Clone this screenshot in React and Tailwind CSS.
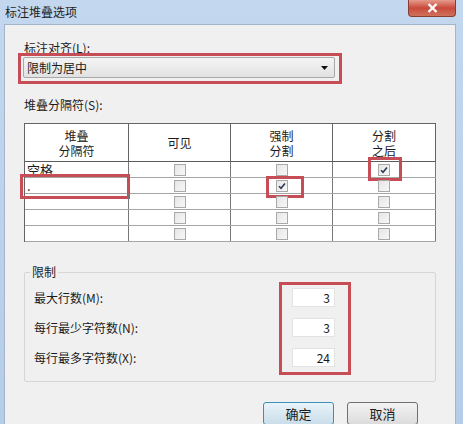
import React from 'react';

const font = { fontFamily: '"Noto Sans CJK SC", "Noto Sans", sans-serif' };

// Red annotation box drawn over a control
const Mark = ({ className }) => (
  <div className={`pointer-events-none absolute border-[3px] border-[#c64d56] ${className}`} />
);

const Check = ({ checked }) => (
  <div className="w-[12px] h-[12px] border border-[#a9a9a9] bg-gradient-to-br from-[#e6e6e6] to-[#f7f7f7] flex items-center justify-center">
    {checked && (
      <svg width="8" height="8" viewBox="0 0 8 8">
        <path d="M1 4.2 L3 6.2 L7 1.5" fill="none" stroke="#2b3a55" strokeWidth="1.6" />
      </svg>
    )}
  </div>
);

const rows = [
  { name: '空格', checks: [false, false, true] },
  { name: '.', checks: [false, true, false] },
  { name: '', checks: [false, false, false] },
  { name: '', checks: [false, false, false] },
  { name: '', checks: [false, false, false] },
];

const headers = [['堆叠', '分隔符'], ['可见'], ['强制', '分割'], ['分割', '之后']];
const colW = ['w-[104px]', 'w-[102px]', 'w-[102px]', 'w-[103px]'];

const limits = [
  { label: '最大行数(M):', value: '3' },
  { label: '每行最少字符数(N):', value: '3' },
  { label: '每行最多字符数(X):', value: '24' },
];

export default function App() {
  return (
    <div
      className="w-[463px] h-[424px] overflow-hidden bg-gradient-to-b from-[#c3d8ef] to-[#b6cde7] flex flex-col text-[12px] text-[#1b1b1b]"
      style={font}
    >
      {/* title bar */}
      <div className="h-[24px] flex items-start justify-between shrink-0">
        <span className="pl-[5px] pt-[4px] leading-[16px] text-[12px] text-[#1e1e1e]">标注堆叠选项</span>
        <div className="mr-[7px] w-[48px] h-[17px] rounded-b-[4px] border border-t-0 border-[#8a3b33] bg-gradient-to-b from-[#e59a8c] via-[#c9493b] to-[#d0705e] flex items-center justify-center">
          <svg width="11" height="10" viewBox="0 0 11 10">
            <path d="M1.5 1 L9.5 9 M9.5 1 L1.5 9" stroke="#fff" strokeWidth="2.4" />
          </svg>
        </div>
      </div>

      {/* client area */}
      <div className="ml-[4px] mr-[7px] flex-1 bg-[#f1f0f1] border border-b-0 border-[#a3b5cb] pl-[19px] pr-[20px] pt-[15px]">
        <div className="leading-[16px]">标注对齐(L):</div>
        <div className="relative mt-[1px] w-[312px] -ml-[1px]">
          <div className="h-[21px] border border-[#a8a8a8] rounded-[2px] bg-gradient-to-b from-[#f4f4f4] to-[#e2e2e2] flex items-center justify-between pl-[3px] pr-[6px]">
            <span className="text-[12px] leading-[16px]">限制为居中</span>
            <svg width="7" height="4" viewBox="0 0 7 4">
              <path d="M0 0 H7 L3.5 4 Z" fill="#111" />
            </svg>
          </div>
          <Mark className="-left-[5px] -top-[4px] -right-[7px] -bottom-[6px]" />
        </div>

        <div className="mt-[19px] leading-[16px]">堆叠分隔符(S):</div>

        {/* separator table */}
        <div className="mt-[10px] w-[412px] border-l border-t border-[#646464] bg-white">
          <div className="flex h-[38px] border-b border-[#5c5c5c]">
            {headers.map((h, i) => (
              <div
                key={i}
                className={`${colW[i]} border-r border-[#646464] flex flex-col items-center justify-center leading-[15px] text-[12px]`}
              >
                {h.map((t) => (
                  <span key={t}>{t}</span>
                ))}
              </div>
            ))}
          </div>
          {rows.map((r, ri) => (
            <div key={ri} className="flex h-[16px] border-b border-[#a5a5a5]">
              <div className="relative w-[104px] border-r border-[#777] pl-[2px] text-[13px] leading-[15px]">
                {r.name}
                {ri === 1 && <Mark className="-left-[5px] -top-[4px] right-[-2px] -bottom-[6px]" />}
              </div>
              {r.checks.map((c, ci) => (
                <div
                  key={ci}
                  className={`${colW[ci + 1]} border-r border-[#777] flex items-center justify-center`}
                >
                  <div className="relative">
                    <Check checked={c} />
                    {c && ci === 1 && <Mark className="-left-[10px] -top-[4px] -right-[16px] -bottom-[6px]" />}
                    {c && ci === 2 && <Mark className="-left-[10px] -top-[7px] -right-[12px] -bottom-[5px]" />}
                  </div>
                </div>
              ))}
            </div>
          ))}
        </div>

        {/* limits group */}
        <fieldset className="mt-[22px] w-[412px] border border-[#d6d6d6] rounded-[2px] pl-[9px] pt-[8px] pb-[14px]">
          <legend className="-ml-[4px] px-[2px] leading-[16px]">限制</legend>
          <div className="relative flex flex-col gap-[11px]">
            {limits.map((l) => (
              <div key={l.label} className="flex items-center h-[19px]">
                <span className="w-[258px] leading-[16px]">{l.label}</span>
                <div className="w-[43px] h-[19px] bg-white border border-[#e3e3e3] flex items-center justify-end pr-[4px] text-[12px]">
                  {l.value}
                </div>
              </div>
            ))}
            <Mark className="left-[245px] -top-[6px] w-[72px] -bottom-[8px]" />
          </div>
        </fieldset>

        {/* buttons */}
        <div className="mt-[20px] flex justify-end gap-[13px] pr-[17px]">
          <button className="w-[71px] h-[23px] rounded-[3px] border border-[#3c8fb8] bg-gradient-to-b from-[#eaf4fa] to-[#c9dde9] text-[13px] leading-[16px]">
            确定
          </button>
          <button className="w-[71px] h-[23px] rounded-[3px] border border-[#707070] bg-gradient-to-b from-[#f3f3f3] to-[#dcdcdc] text-[13px] leading-[16px]">
            取消
          </button>
        </div>
      </div>
    </div>
  );
}
